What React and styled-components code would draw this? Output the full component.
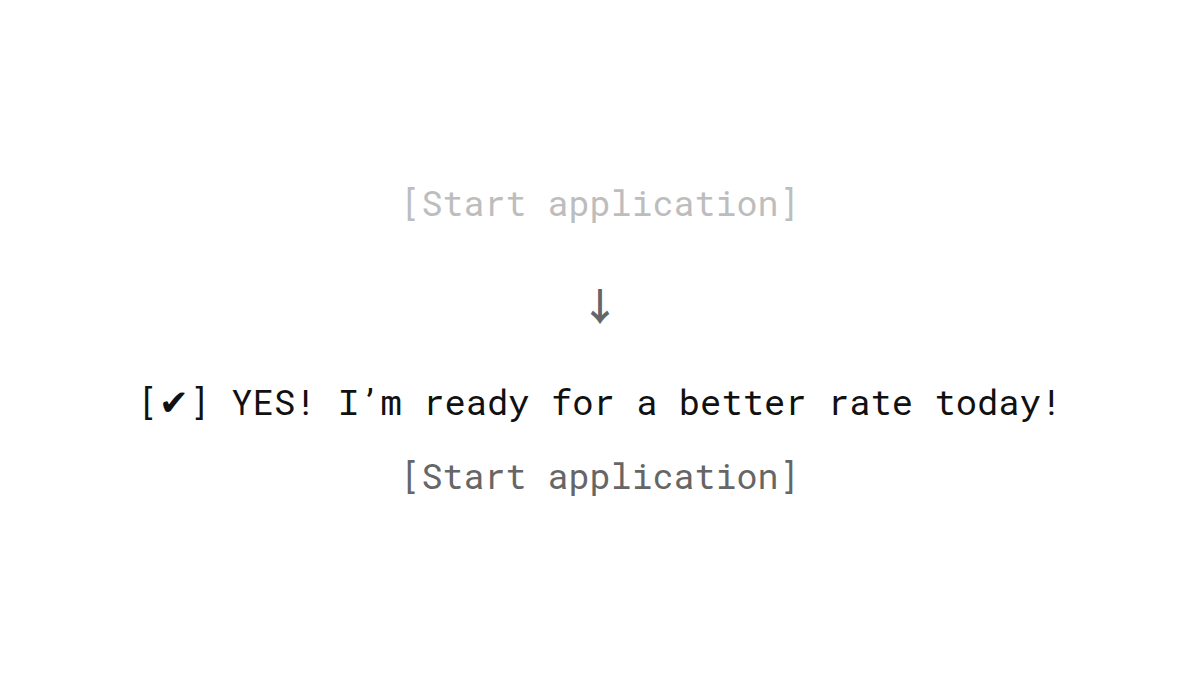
import styled, { createGlobalStyle } from 'styled-components';

const GlobalStyle = createGlobalStyle`
  html, body {
    margin: 0;
    padding: 0;
    background: #ffffff;
  }
  body {
    font-family: "Roboto Mono", "DejaVu Sans Mono", "Liberation Mono", monospace;
  }
`;

const Page = styled.main`
  width: 1200px;
  height: 676px;
  display: flex;
  flex-direction: column;
  align-items: center;
  justify-content: center;
  box-sizing: border-box;
`;

const Link = styled.a`
  display: block;
  font-size: 35px;
  line-height: 40px;
  color: ${({ $muted }) => ($muted ? '#bdbdbd' : '#666666')};
  text-decoration: none;
  white-space: pre;
`;

const Arrow = styled.div`
  font-family: "Noto Sans CJK SC", "DejaVu Sans", sans-serif;
  font-size: 36px;
  line-height: 40px;
  color: #666666;
  -webkit-text-stroke: 1.3px #666666;
  margin: 62px 0 58px;
`;

const Pledge = styled.p`
  margin: 0 0 32px;
  font-size: 35.5px;
  line-height: 40px;
  color: #111111;
  white-space: pre;
`;

const Check = styled.span`
  font-family: "DejaVu Sans", sans-serif;
`;

const App = () => {
  return (
    <>
      <GlobalStyle />
      <Page>
        <Link $muted>[Start application]</Link>
        <Arrow>↓</Arrow>
        <Pledge>
          [<Check>✔</Check>] YES! I’m ready for a better rate today!
        </Pledge>
        <Link>[Start application]</Link>
      </Page>
    </>
  );
};

export default App;
